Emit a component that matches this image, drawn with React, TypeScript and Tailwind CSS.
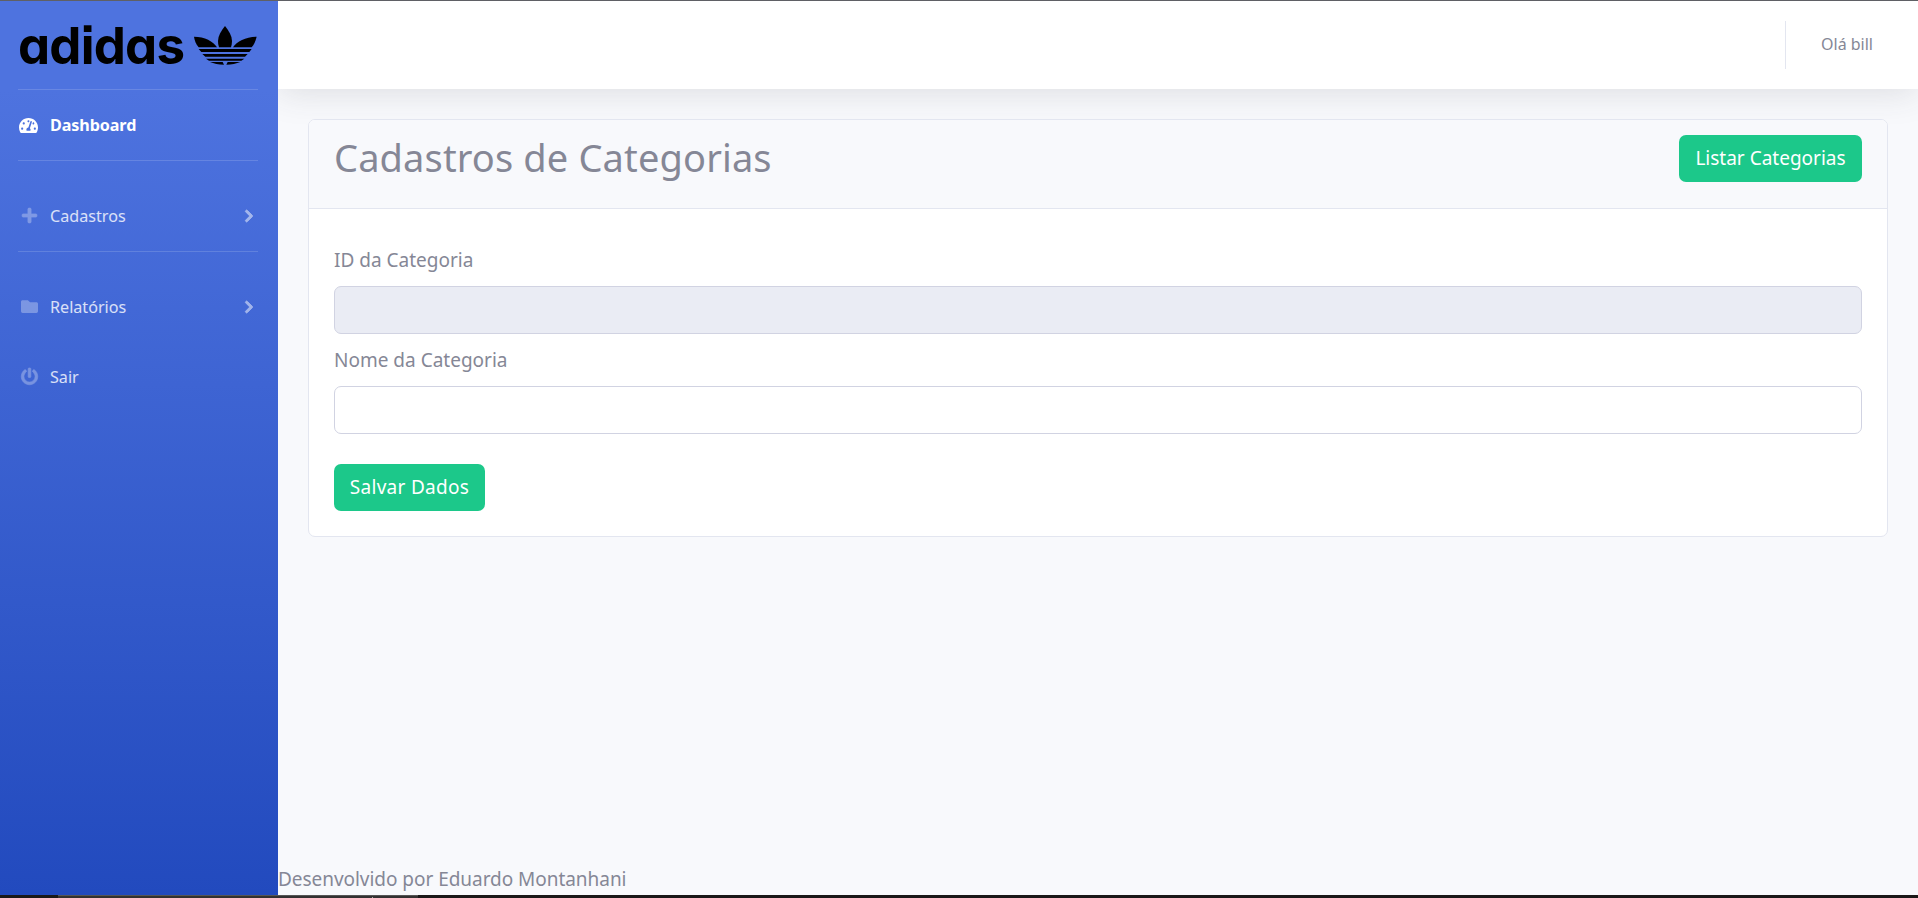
import type { ReactNode } from "react";
import { FaChevronRight, FaFolder, FaPlus, FaPowerOff, FaTachometerAlt } from "react-icons/fa";

function Trefoil() {
  return (
    <svg viewBox="0 0 189 117" className="h-[39px] w-[63px]" fill="#000">
      <path d="M93 0C105 15 114 30 114 45C114 52 113 58 111 64H75C73 58 72 52 72 45C72 30 81 15 93 0Z" />
      <path d="M0 32C32 32 58 46 69 64H14C6 55 2 44 0 32Z" />
      <path d="M188 32C156 32 128 46 117 64H173C181 55 185 44 188 32Z" />
      <path d="M14 69H173L166 78H22ZM25 84H161L153 92H34ZM36 98H151L142 104H45ZM48 108H86L90 116C74 116 59 113 48 108ZM139 108H101L97 116C112 116 128 113 139 108Z" />
    </svg>
  );
}

function NavItem({ icon, label, arrow = false }: { icon: ReactNode; label: string; arrow?: boolean }) {
  return (
    <a className="flex h-[57px] items-center pr-5 pl-[18px] text-[16.15px] text-white/80">
      <span className="flex w-[22px] shrink-0 justify-center text-[17px] text-white opacity-30">{icon}</span>
      <span className="ml-[10px] pt-[2px]">{label}</span>
      {arrow && (
        <FaChevronRight className="mr-[2px] ml-auto overflow-visible stroke-current stroke-[36] text-[14px] text-white opacity-50" />
      )}
    </a>
  );
}

function Divider() {
  return <hr className="mr-5 ml-[18px] h-px shrink-0 border-0 bg-white/15" />;
}

function Sidebar() {
  return (
    <aside className="flex w-[278px] shrink-0 flex-col bg-[linear-gradient(180deg,#4e73df_10%,#224abe_100%)]">
      <div className="flex h-[88px] items-start pt-[25px] pl-[18px]">
        <span className="w-[176px] font-['Inter'] text-[51px] leading-[40px] font-bold tracking-[-0.8px] text-black [font-feature-settings:'cv11','ss07']">
          adidas
        </span>
        <Trefoil />
      </div>
      <Divider />
      <a className="flex h-[70px] items-center px-[18px] text-[16.15px] font-bold text-white">
        <span className="flex w-[22px] justify-center pr-px text-[19px]">
          <FaTachometerAlt />
        </span>
        <span className="ml-[10px] pt-px tracking-[-0.1px]">Dashboard</span>
      </a>
      <Divider />
      <div className="h-[26px]" />
      <NavItem icon={<FaPlus className="overflow-visible stroke-current stroke-[20]" />} label="Cadastros" arrow />
      <div className="h-[7px]" />
      <Divider />
      <div className="h-[26px]" />
      <NavItem icon={<FaFolder />} label="Relatórios" arrow />
      <div className="h-[13px]" />
      <NavItem icon={<FaPowerOff className="overflow-visible stroke-current stroke-[20]" />} label="Sair" />
    </aside>
  );
}

function Field({ label, disabled = false }: { label: string; disabled?: boolean }) {
  return (
    <label className="block">
      <span className="block h-[42px] pt-px leading-[30px]">{label}</span>
      <input
        disabled={disabled}
        className="mb-[10px] block h-12 w-full rounded-[7px] border border-[#d1d3e2] bg-white px-4 disabled:bg-[#eaecf4]"
      />
    </label>
  );
}

export default function App() {
  return (
    <div className="flex h-[898px] w-full flex-col overflow-hidden bg-[#f8f9fc] font-['Noto_Sans',sans-serif] text-[19px] text-[#858796]">
      <div className="h-px shrink-0 bg-[#5f6065]" />
      <div className="flex h-[894px] shrink-0">
        <Sidebar />
        <div className="flex min-w-0 flex-1 flex-col overflow-hidden">
          <header className="flex h-[88px] shrink-0 items-center justify-end bg-white shadow-[0_3px_35px_rgba(58,59,69,0.15)]">
            <div className="h-12 w-px bg-[#e3e6f0]" />
            <span className="mr-[45px] ml-[35px] pb-[2px] text-[16px]">Olá bill</span>
          </header>
          <main className="relative flex-1 px-[30px] pt-[30px]">
            <section className="h-[418px] overflow-hidden rounded-[7px] border border-[#e3e6f0] bg-white">
              <div className="flex h-[89px] items-start justify-between border-b border-[#e3e6f0] bg-[#f8f9fc] px-[25px] pt-[13px]">
                <h1 className="text-[38px] leading-[48px] tracking-[0.14px]">Cadastros de Categorias</h1>
                <button className="mt-[2px] h-[47px] w-[183px] rounded-[7px] bg-[#1cc88a] pb-px text-white">
                  Listar Categorias
                </button>
              </div>
              <form className="px-[25px] pt-[35px]">
                <Field label="ID da Categoria" disabled />
                <Field label="Nome da Categoria" />
                <button type="button" className="mt-5 h-[47px] w-[151px] rounded-[7px] bg-[#1cc88a] pb-px tracking-[0.3px] text-white">
                  Salvar Dados
                </button>
              </form>
            </section>
          </main>
          <footer className="h-[31px] leading-[30px] tracking-[-0.04px]">Desenvolvido por Eduardo Montanhani</footer>
        </div>
      </div>
      <div className="flex h-[3px] shrink-0 bg-[#1a1818] pl-[58px]">
        <div className="flex h-[3px] w-[360px] border-t border-[#555] bg-[#333131] pl-[314px]">
          <div className="mt-px h-px w-px bg-[#aaa]" />
        </div>
      </div>
    </div>
  );
}
